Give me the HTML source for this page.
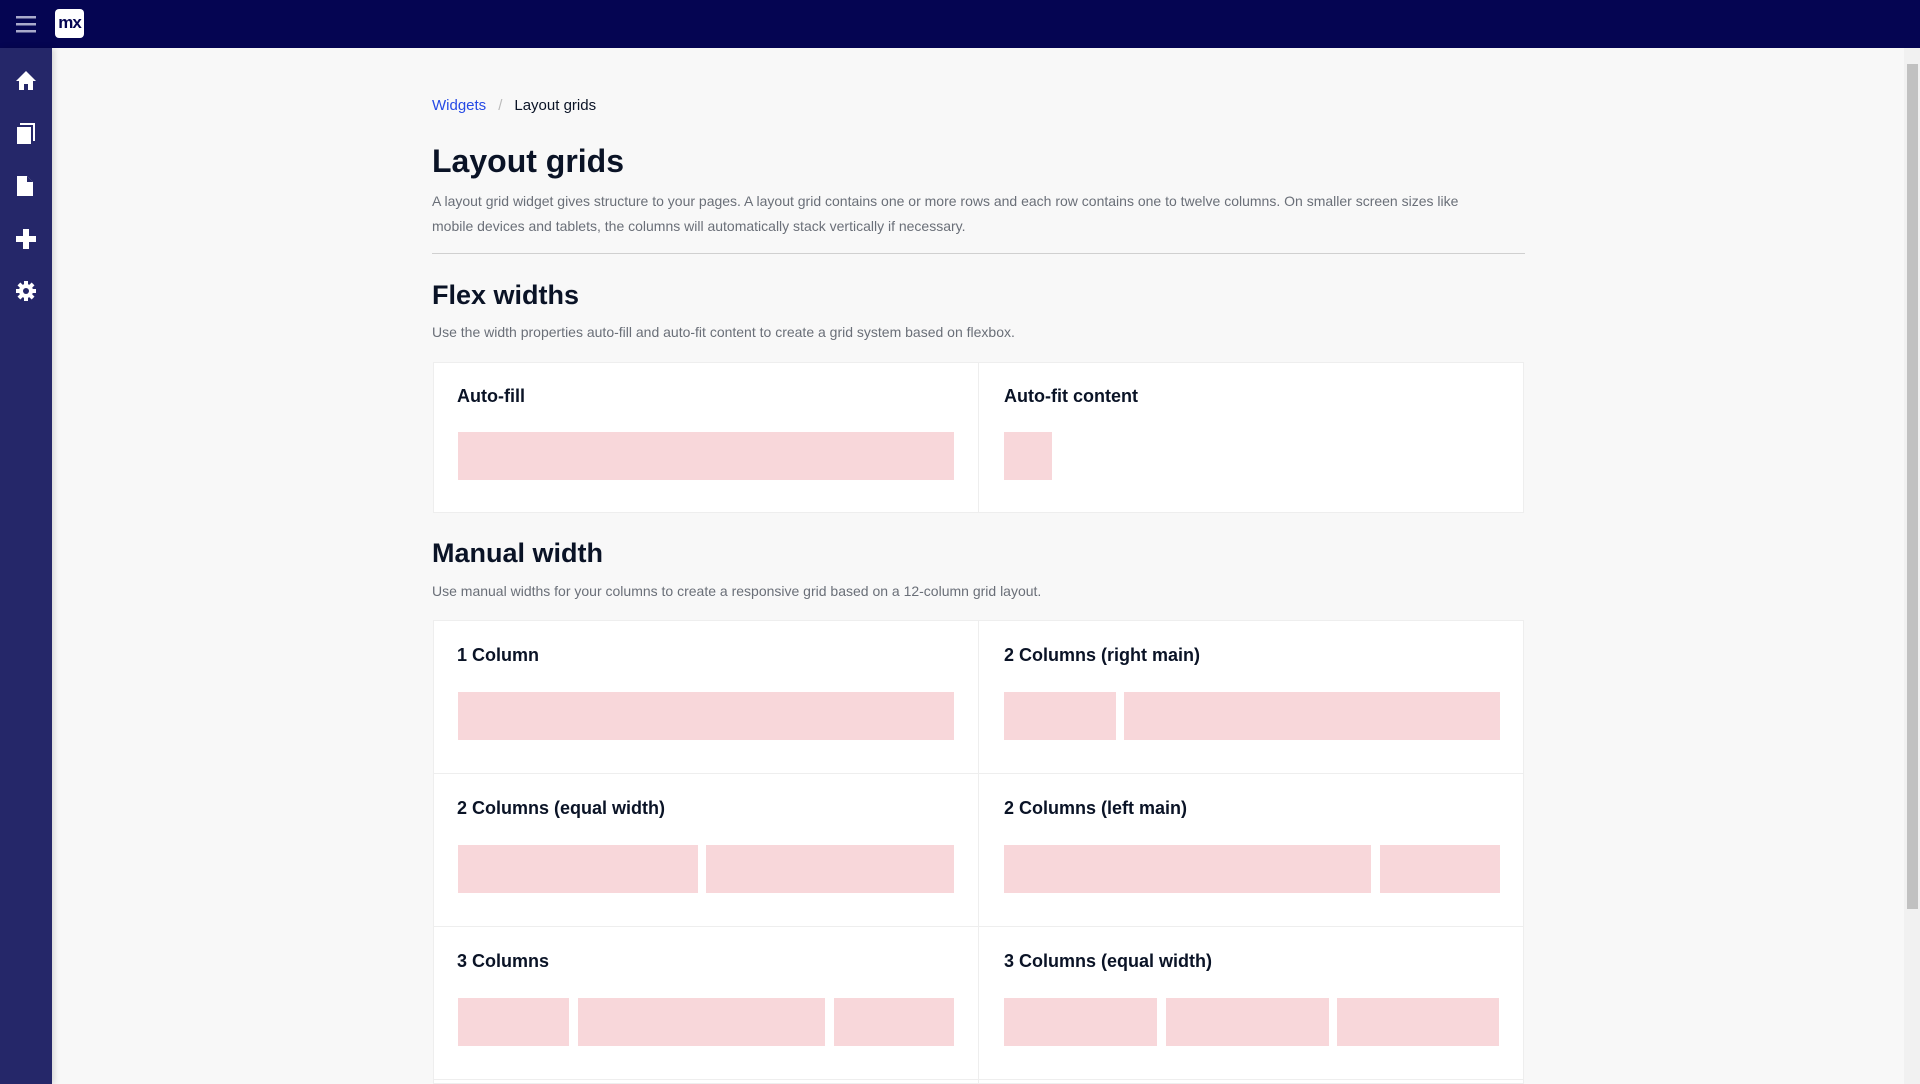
<!DOCTYPE html>
<html style="overflow:hidden;height:1084px"><head><meta charset="utf-8"><style>
*{margin:0;padding:0;box-sizing:border-box}
html,body{overflow:hidden}
body{width:1920px;height:1084px;background:#f8f8f8;font-family:"Liberation Sans",sans-serif;position:relative}
.top{position:absolute;left:0;top:0;width:1920px;height:48px;background:#050552}
.side{position:absolute;left:0;top:48px;width:52px;height:1036px;background:#252769;box-shadow:2px 0 6px rgba(0,0,0,.15)}
.a{position:absolute}
.t{color:#0a1326}
.bc{top:97px;left:432px;font-size:15px}
h1{position:absolute;left:432px;top:143px;font-size:32px;font-weight:700;color:#0a1326}
.p{left:432px;font-size:14px;color:#6a6f78;line-height:24.5px}
.hr{left:432px;top:253px;width:1093px;height:1px;background:#d0d0d0}
h2{position:absolute;left:432px;font-size:27px;font-weight:700;color:#0a1326}
.card{position:absolute;background:#fff;border:1px solid #eee}
.ct{position:absolute;font-size:18px;font-weight:700;color:#0a1326}
.bar{position:absolute;background:#f8d7da;height:48px}
.sb{position:absolute;left:1904px;top:48px;width:16px;height:1036px;background:#f1f1f1}
.th{position:absolute;left:3px;top:16px;width:11px;height:845px;background:#c1c1c1}
</style></head><body>
<div class="top">
<svg class="a" style="left:16px;top:14px" width="22" height="20"><rect y="2" width="20" height="2.5" fill="#a9aacb"/><rect y="9" width="20" height="2.5" fill="#a9aacb"/><rect y="16" width="20" height="2.5" fill="#a9aacb"/></svg>
<div class="a" style="left:55px;top:9px;width:29px;height:29px;background:#fff;border-radius:4px;color:#050552;font-weight:700;font-size:17px;text-align:center;line-height:28px;letter-spacing:-1px">mx</div>
</div>
<div class="side">
<svg class="a" style="left:15px;top:22px" width="22" height="22" viewBox="0 0 22 22"><path d="M11 1L1 11h3v9h5v-6h4v6h5v-9h3z" fill="#fff"/></svg>
<svg class="a" style="left:16px;top:75px" width="20" height="22" viewBox="0 0 20 22"><path d="M1 4h14v17H1z" fill="#fff"/><path d="M4 1h14v17" fill="none" stroke="#fff" stroke-width="2"/></svg>
<svg class="a" style="left:16px;top:127px" width="18" height="22" viewBox="0 0 18 22"><path d="M1 1h10l6 6v14H1z" fill="#fff"/><path d="M11 1v6h6" fill="#252769"/></svg>
<svg class="a" style="left:15px;top:180px" width="22" height="22" viewBox="0 0 22 22"><path d="M8 1h6v7h7v6h-7v7H8v-7H1V8h7z" fill="#fff"/></svg>
<svg class="a" style="left:15px;top:232px" width="22" height="22" viewBox="0 0 22 22"><g fill="#fff"><circle cx="11" cy="11" r="7"/><rect x="9" y="1" width="4" height="20"/><rect x="1" y="9" width="20" height="4"/><rect x="9" y="1" width="4" height="20" transform="rotate(45 11 11)"/><rect x="9" y="1" width="4" height="20" transform="rotate(-45 11 11)"/></g><circle cx="11" cy="11" r="3" fill="#252769"/></svg>
</div>
<div class="a bc"><span style="color:#264ae5">Widgets</span><span style="color:#bbb;margin:0 12px">/</span><span class="t">Layout grids</span></div>
<h1>Layout grids</h1>
<div class="a p" style="top:189px;width:1040px">A layout grid widget gives structure to your pages. A layout grid contains one or more rows and each row contains one to twelve columns. On smaller screen sizes like mobile devices and tablets, the columns will automatically stack vertically if necessary.</div>
<div class="a hr"></div>
<h2 style="top:280px">Flex widths</h2>
<div class="a p" style="top:320px">Use the width properties auto-fill and auto-fit content to create a grid system based on flexbox.</div>
<div class="card" style="left:433px;top:362px;width:546px;height:151px"></div>
<div class="card" style="left:978px;top:362px;width:546px;height:151px"></div>
<div class="ct" style="left:457px;top:386px">Auto-fill</div>
<div class="ct" style="left:1004px;top:386px">Auto-fit content</div>
<div class="bar" style="left:458px;top:432px;width:496px"></div>
<div class="bar" style="left:1004px;top:432px;width:48px"></div>
<h2 style="top:538px">Manual width</h2>
<div class="a p" style="top:579px">Use manual widths for your columns to create a responsive grid based on a 12-column grid layout.</div>
<div class="card" style="left:433px;top:620px;width:546px;height:154px"></div>
<div class="card" style="left:978px;top:620px;width:546px;height:154px"></div>
<div class="card" style="left:433px;top:773px;width:546px;height:154px"></div>
<div class="card" style="left:978px;top:773px;width:546px;height:154px"></div>
<div class="card" style="left:433px;top:926px;width:546px;height:154px"></div>
<div class="card" style="left:978px;top:926px;width:546px;height:154px"></div>
<div class="card" style="left:433px;top:1079px;width:546px;height:5px"></div>
<div class="card" style="left:978px;top:1079px;width:546px;height:5px"></div>
<div class="ct" style="left:457px;top:645px">1 Column</div>
<div class="ct" style="left:1004px;top:645px">2 Columns (right main)</div>
<div class="ct" style="left:457px;top:798px">2 Columns (equal width)</div>
<div class="ct" style="left:1004px;top:798px">2 Columns (left main)</div>
<div class="ct" style="left:457px;top:951px">3 Columns</div>
<div class="ct" style="left:1004px;top:951px">3 Columns (equal width)</div>
<div class="bar" style="left:458px;top:692px;width:496px"></div>
<div class="bar" style="left:1004px;top:692px;width:112px"></div>
<div class="bar" style="left:1124px;top:692px;width:376px"></div>
<div class="bar" style="left:458px;top:845px;width:240px"></div>
<div class="bar" style="left:706px;top:845px;width:248px"></div>
<div class="bar" style="left:1004px;top:845px;width:367px"></div>
<div class="bar" style="left:1380px;top:845px;width:120px"></div>
<div class="bar" style="left:458px;top:998px;width:111px"></div>
<div class="bar" style="left:578px;top:998px;width:247px"></div>
<div class="bar" style="left:834px;top:998px;width:120px"></div>
<div class="bar" style="left:1004px;top:998px;width:153px"></div>
<div class="bar" style="left:1166px;top:998px;width:163px"></div>
<div class="bar" style="left:1337px;top:998px;width:162px"></div>
<div class="sb"><div class="th"></div></div>
</body></html>
